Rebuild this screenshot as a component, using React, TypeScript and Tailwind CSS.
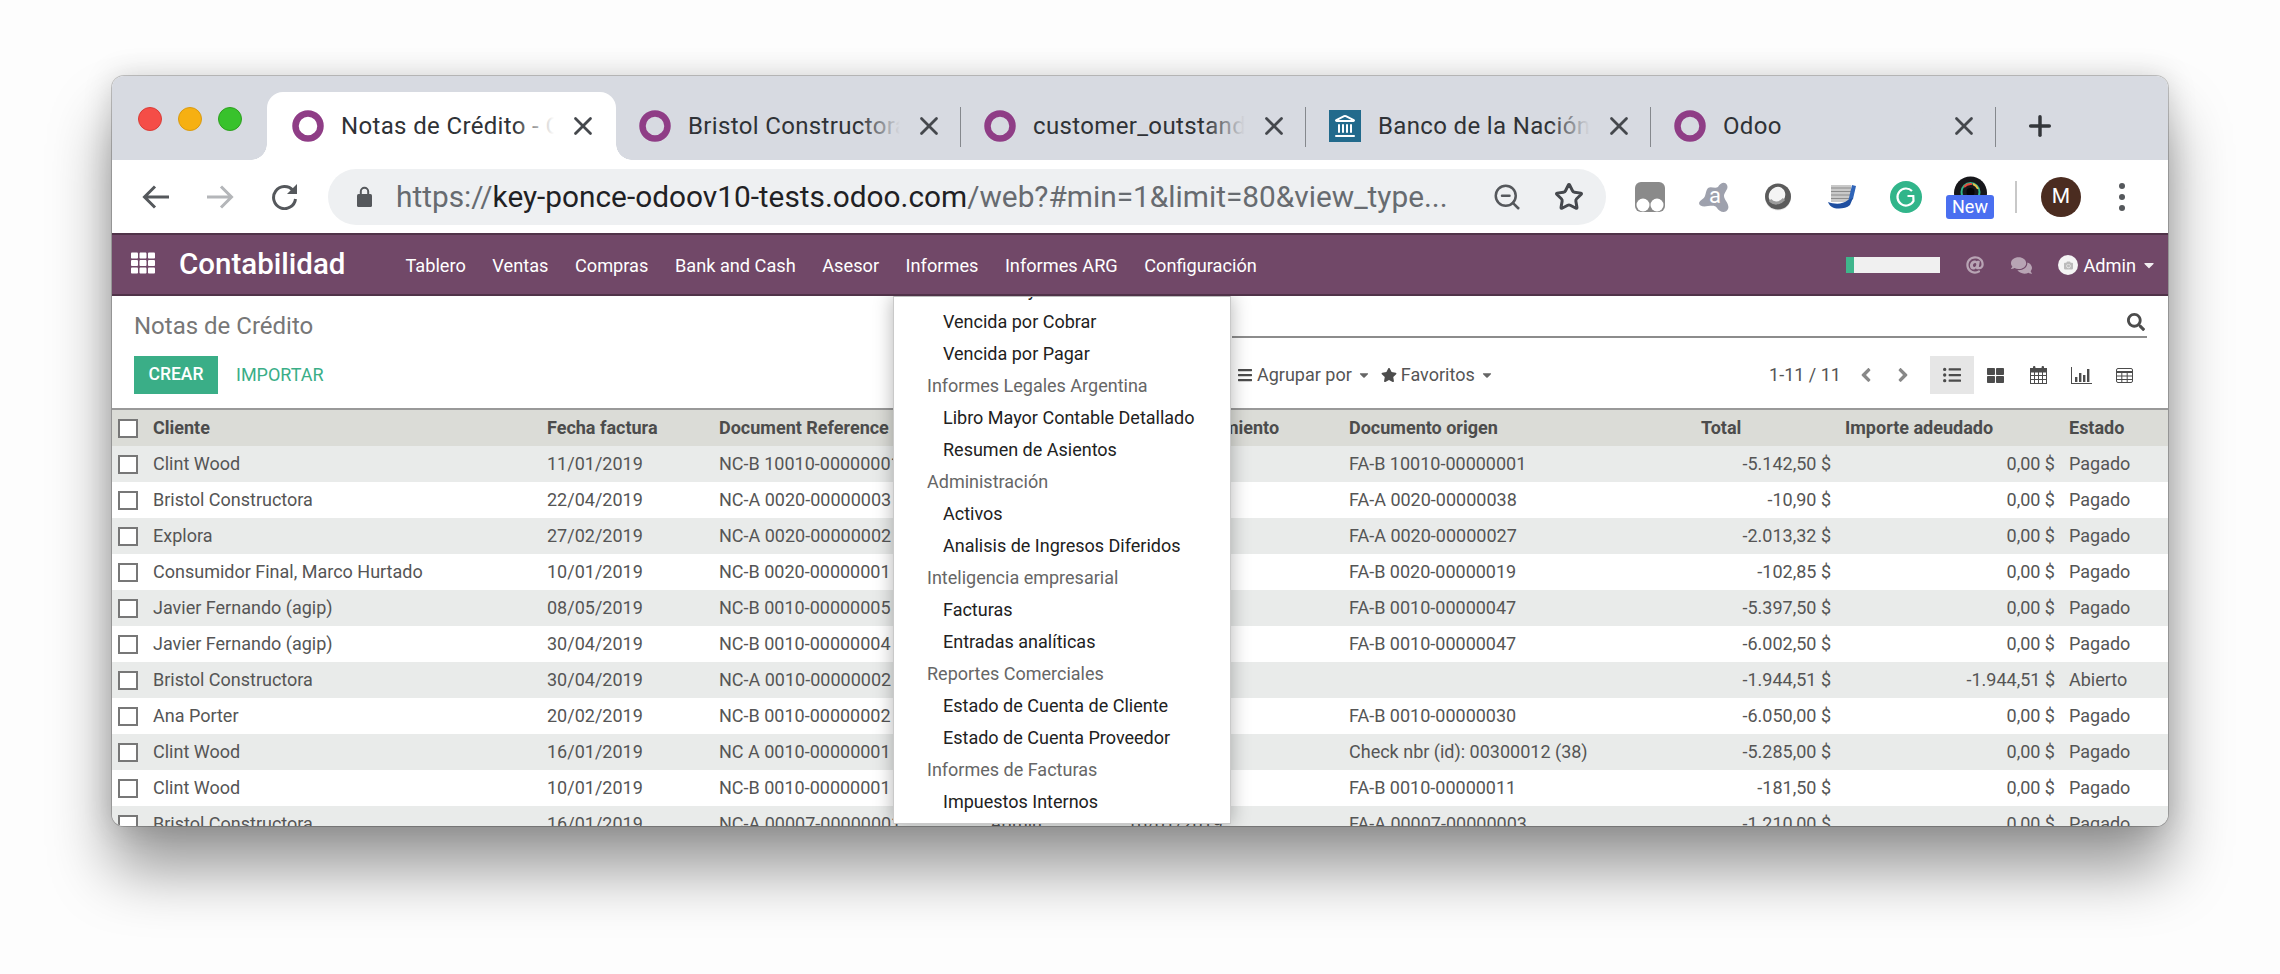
import React from "react";
import { Landmark, Plus, Star, X, ZoomOut } from "lucide-react";
import {
  FaAngleLeft,
  FaAngleRight,
  FaAt,
  FaBars,
  FaCaretDown,
  FaCamera,
  FaComments,
  FaListUl,
  FaSearch,
  FaStar,
  FaTh,
  FaThLarge,
} from "react-icons/fa";

const COLS = "grid grid-cols-[41px_394px_172px_271px_137px_222px_352px_144px_224px_1fr]";

type Row = {
  client: string;
  date: string;
  doc: string;
  origin: string;
  total: string;
  due: string;
  state: string;
  seller?: string;
  limit?: string;
};

const rows: Row[] = [
  { client: "Clint Wood", date: "11/01/2019", doc: "NC-B 10010-00000001", origin: "FA-B 10010-00000001", total: "-5.142,50 $", due: "0,00 $", state: "Pagado" },
  { client: "Bristol Constructora", date: "22/04/2019", doc: "NC-A 0020-00000003", origin: "FA-A 0020-00000038", total: "-10,90 $", due: "0,00 $", state: "Pagado" },
  { client: "Explora", date: "27/02/2019", doc: "NC-A 0020-00000002", origin: "FA-A 0020-00000027", total: "-2.013,32 $", due: "0,00 $", state: "Pagado" },
  { client: "Consumidor Final, Marco Hurtado", date: "10/01/2019", doc: "NC-B 0020-00000001", origin: "FA-B 0020-00000019", total: "-102,85 $", due: "0,00 $", state: "Pagado" },
  { client: "Javier Fernando (agip)", date: "08/05/2019", doc: "NC-B 0010-00000005", origin: "FA-B 0010-00000047", total: "-5.397,50 $", due: "0,00 $", state: "Pagado" },
  { client: "Javier Fernando (agip)", date: "30/04/2019", doc: "NC-B 0010-00000004", origin: "FA-B 0010-00000047", total: "-6.002,50 $", due: "0,00 $", state: "Pagado" },
  { client: "Bristol Constructora", date: "30/04/2019", doc: "NC-A 0010-00000002", origin: "", total: "-1.944,51 $", due: "-1.944,51 $", state: "Abierto" },
  { client: "Ana Porter", date: "20/02/2019", doc: "NC-B 0010-00000002", origin: "FA-B 0010-00000030", total: "-6.050,00 $", due: "0,00 $", state: "Pagado" },
  { client: "Clint Wood", date: "16/01/2019", doc: "NC A 0010-00000001", origin: "Check nbr (id): 00300012 (38)", total: "-5.285,00 $", due: "0,00 $", state: "Pagado" },
  { client: "Clint Wood", date: "10/01/2019", doc: "NC-B 0010-00000001", origin: "FA-B 0010-00000011", total: "-181,50 $", due: "0,00 $", state: "Pagado" },
  { client: "Bristol Constructora", date: "16/01/2019", doc: "NC-A 00007-00000001", origin: "FA-A 00007-00000003", total: "-1.210,00 $", due: "0,00 $", state: "Pagado", seller: "Admin", limit: "16/01/2019" },
];

const menu: { label: string; head?: boolean }[] = [
  { label: "Pendiente y Vencida" },
  { label: "Vencida por Cobrar" },
  { label: "Vencida por Pagar" },
  { label: "Informes Legales Argentina", head: true },
  { label: "Libro Mayor Contable Detallado" },
  { label: "Resumen de Asientos" },
  { label: "Administración", head: true },
  { label: "Activos" },
  { label: "Analisis de Ingresos Diferidos" },
  { label: "Inteligencia empresarial", head: true },
  { label: "Facturas" },
  { label: "Entradas analíticas" },
  { label: "Reportes Comerciales", head: true },
  { label: "Estado de Cuenta de Cliente" },
  { label: "Estado de Cuenta Proveedor" },
  { label: "Informes de Facturas", head: true },
  { label: "Impuestos Internos" },
];

function OdooRing() {
  return (
    <svg width="32" height="32" viewBox="0 0 32 32" className="shrink-0">
      <circle cx="16" cy="16" r="12.5" fill="none" stroke="#8f3d86" strokeWidth="6.5" />
    </svg>
  );
}

function Tab({ icon, title, active }: { icon: React.ReactNode; title: string; active?: boolean }) {
  return (
    <div
      className={`relative flex h-[68px] shrink-0 items-center ${
        active ? "w-[349px] rounded-t-[16px] bg-white pl-[25px] pr-[18px]" : "w-[345px] pl-[23px] pr-[17px]"
      }`}
    >
      {active && (
        <>
          <div className="absolute bottom-0 left-[-16px] h-4 w-4 bg-[radial-gradient(circle_at_0_0,transparent_15.5px,white_16px)]" />
          <div className="absolute bottom-0 right-[-16px] h-4 w-4 bg-[radial-gradient(circle_at_100%_0,transparent_15.5px,white_16px)]" />
        </>
      )}
      {icon}
      <div className="relative ml-[17px] min-w-0 flex-1 overflow-hidden whitespace-nowrap text-[24px] leading-[32px] tracking-[0.35px] text-[#2f3236]">
        {title}
        <div
          className={`absolute inset-y-0 right-0 w-10 ${
            active ? "bg-gradient-to-r from-white/0 to-white" : "bg-gradient-to-r from-[#d7dae1]/0 to-[#d7dae1]"
          }`}
        />
      </div>
      <X className="ml-[14px] shrink-0 text-[#45484d]" size={30} strokeWidth={2.2} />
      {!active && <div className="absolute right-0 top-[15px] h-[40px] w-[1.5px] bg-[#85888d]" />}
    </div>
  );
}

function Extensions() {
  return (
    <div className="ml-[29px] flex items-center">
      {/* tampermonkey */}
      <svg width="30" height="30" viewBox="0 0 30 30">
        <rect width="30" height="30" rx="6" fill="#8a8a8a" />
        <circle cx="8" cy="23" r="6.5" fill="white" />
        <circle cx="22" cy="23" r="6.5" fill="white" />
      </svg>
      {/* avast */}
      <div className="relative ml-[34px] h-[32px] w-[31px]">
        <svg width="31" height="32" viewBox="0 0 31 32">
          <path
            d="M9 7C12 5 16 8 19 6 21 2 26 0 28 4 30 8 25 11 25 15 25 19 31 23 29 28 27 33 20 31 18 27 16 24 13 25 9 25 4 26 0 25 0 22 1 19 5 18 6 15 7 12 7 9 9 7z"
            fill="#9ea1ad"
          />
        </svg>
        <span className="absolute left-[10px] top-[2px] text-[22px] leading-[26px] text-white">a</span>
      </div>
      {/* round extension */}
      <svg className="ml-[35px]" width="26" height="28" viewBox="0 0 26 28">
        <circle cx="13" cy="14.5" r="13" fill="#e6e6e6" />
        <circle cx="13" cy="13.5" r="13" fill="#5b5b5b" />
        <ellipse cx="12" cy="12.5" rx="8" ry="9" fill="#f4f4f4" transform="rotate(30 12 12.5)" />
        <path d="M5 17c3 4 10 4 14-1" stroke="#9b9b9b" strokeWidth="3" fill="none" />
      </svg>
      {/* notes */}
      <svg className="ml-[37px]" width="28" height="25" viewBox="0 0 28 25">
        <rect x="3" y="1" width="20" height="17" fill="#c9c9c9" />
        <path d="M3 4h20M3 7.5h20M3 11h19M3 14.5h18" stroke="#8c8c8c" strokeWidth="1.2" />
        <path d="M24 1l4 1-3 13-5 3z" fill="#2f64b8" />
        <path d="M0 18c6 2 14 3 20-2l5-2-3 7c-4 4-12 4-16 3-3-1-5-3-6-6z" fill="#1f4fa0" />
      </svg>
      {/* grammarly */}
      <svg className="ml-[34px]" width="32" height="32" viewBox="0 0 32 32">
        <circle cx="16" cy="16" r="16" fill="#31b58a" />
        <path d="M22 10a8.5 8.5 0 1 0 1.5 10l-.2-5h-5.8" stroke="white" strokeWidth="2.2" fill="none" />
      </svg>
      {/* camera with badge */}
      <div className="relative ml-[32px] h-[44px] w-[33px]">
        <svg width="33" height="22" viewBox="0 0 33 22">
          <circle cx="16.5" cy="18" r="16.5" fill="#17171b" />
          <circle cx="16.5" cy="17" r="9" fill="none" stroke="#31b58a" strokeWidth="2" />
          <path d="M10 12a9 9 0 0 1 8-3" stroke="#e34b3f" strokeWidth="2" fill="none" />
          <path d="M19 9a9 9 0 0 1 5 5" stroke="#e8c14a" strokeWidth="2" fill="none" />
          <circle cx="16.5" cy="17" r="4" fill="#050505" />
        </svg>
        <div className="absolute left-[-8px] top-[20px] flex h-[24px] w-[48px] items-center justify-center rounded-[3px] bg-[#4a6ff0] text-[18px] leading-none text-white">
          New
        </div>
      </div>
      <div className="ml-[28px] h-[32px] w-[2px] bg-[#c8c8c8]" />
      <div className="ml-[24px] flex h-[40px] w-[40px] items-center justify-center rounded-full bg-[#4b2c20] text-[21px] text-white">
        M
      </div>
      <div className="ml-[38px] flex flex-col gap-[5px]">
        <div className="h-[6px] w-[6px] rounded-full bg-[#55585c]" />
        <div className="h-[6px] w-[6px] rounded-full bg-[#55585c]" />
        <div className="h-[6px] w-[6px] rounded-full bg-[#55585c]" />
      </div>
    </div>
  );
}

function ViewBtn({ children, active }: { children: React.ReactNode; active?: boolean }) {
  return (
    <div className={`flex h-[38px] items-center justify-center text-[#4c4c4c] ${active ? "ml-[9px] w-[44px] bg-[#e6e6e6]" : "w-[43px]"}`}>
      {children}
    </div>
  );
}

export default function App() {
  return (
    <div className="h-[974px] w-[2280px] overflow-hidden bg-[#fdfdfd] pl-[112px] pt-[76px] font-[family-name:Roboto,sans-serif]">
      <div className="flex h-[750px] w-[2056px] flex-col overflow-hidden rounded-[12px] bg-white shadow-[0_0_0_1px_rgba(0,0,0,0.2),0_44px_62px_rgba(0,0,0,0.4),0_0_30px_rgba(0,0,0,0.16)]">
        {/* tab strip */}
        <div className="flex h-[84px] shrink-0 items-end bg-[#d7dae1]">
          <div className="mb-[29px] ml-[26px] flex gap-4">
            <div className="h-6 w-6 rounded-full border border-[#d93c37] bg-[#f54d47]" />
            <div className="h-6 w-6 rounded-full border border-[#d99a10] bg-[#f6b012]" />
            <div className="h-6 w-6 rounded-full border border-[#2da01f] bg-[#38c22c]" />
          </div>
          <div className="ml-[25px] flex items-center">
            <Tab active icon={<OdooRing />} title="Notas de Crédito - Odoo" />
            <Tab icon={<OdooRing />} title="Bristol Constructora" />
            <Tab icon={<OdooRing />} title="customer_outstanding" />
            <Tab
              icon={
                <div className="flex h-[32px] w-[32px] shrink-0 items-center justify-center bg-[#226a8c]">
                  <Landmark size={24} className="text-white" />
                </div>
              }
              title="Banco de la Nación Argentina"
            />
            <Tab icon={<OdooRing />} title="Odoo" />
            <Plus className="ml-[28px] text-[#33363a]" size={32} strokeWidth={2.6} />
          </div>
        </div>

        {/* browser toolbar */}
        <div className="flex h-[73px] shrink-0 items-center bg-white pl-[30px]">
          <svg width="27" height="24" viewBox="0 0 27 24" fill="none" stroke="#55585c" strokeWidth="3">
            <path d="M27 12H3M13 1.5 2.5 12 13 22.5" />
          </svg>
          <svg className="ml-[38px]" width="27" height="24" viewBox="0 0 27 24" fill="none" stroke="#b4b6b9" strokeWidth="3">
            <path d="M0 12h24M14 1.5 24.5 12 14 22.5" />
          </svg>
          <svg className="ml-[37px]" width="27" height="26" viewBox="0 0 27 26" fill="none">
            <path d="M22 6.5A11 11 0 1 0 24.5 15" stroke="#55585c" strokeWidth="3" />
            <path d="M26 0v10H16z" fill="#55585c" />
          </svg>
          <div className="ml-[30px] flex h-[56px] w-[1278px] items-center rounded-full bg-[#eef0f2] pl-[29px] pr-[22px]">
            <svg className="shrink-0" width="15" height="21" viewBox="0 0 15 21">
              <path d="M3.8 9V5.5a3.7 3.7 0 0 1 7.4 0V9" fill="none" stroke="#55585c" strokeWidth="2" />
              <rect y="8" width="15" height="13" rx="1.5" fill="#55585c" />
            </svg>
            <div className="ml-[24px] min-w-0 flex-1 whitespace-nowrap text-[29.8px] leading-none text-[#676b70]">
              https://<span className="text-[#1f2124]">key-ponce-odoov10-tests.odoo.com</span>/web?#min=1&amp;limit=80&amp;view_type...
            </div>
            <ZoomOut size={30} strokeWidth={2} className="ml-[32px] shrink-0 text-[#55585c]" />
            <Star size={30} strokeWidth={2.4} className="ml-[32px] shrink-0 text-[#45484d]" />
          </div>
          <Extensions />
        </div>

        {/* odoo navbar */}
        <div className="flex h-[63px] shrink-0 items-center border-y-2 border-y-[#503349] bg-[#714868] pl-[19px] text-[18.2px] text-white">
          <FaTh size={24} className="mb-[4px] text-white" />
          <span className="ml-[24px] text-[29.5px] font-medium leading-none">Contabilidad</span>
          <div className="ml-[60px] mt-[2px] flex gap-[26.5px]">
            <span>Tablero</span>
            <span>Ventas</span>
            <span>Compras</span>
            <span>Bank and Cash</span>
            <span>Asesor</span>
            <span>Informes</span>
            <span>Informes ARG</span>
            <span>Configuración</span>
          </div>
          <div className="ml-auto mt-[2px] flex items-center pr-[11px]">
            <div className="flex h-[16px] w-[94px] bg-[#f0f0f0]">
              <div className="h-full w-2 bg-[#3fb58c]" />
            </div>
            <FaAt size={18} className="ml-[26px] text-white/50" />
            <FaComments size={21} className="ml-[27px] text-white/50" />
            <div className="ml-[26px] flex h-[20px] w-[20px] items-center justify-center rounded-full bg-[#f4f4f4]">
              <FaCamera size={9} className="text-[#bbb]" />
            </div>
            <span className="ml-[5px]">Admin</span>
            <FaCaretDown size={16} className="ml-[5px] text-white/90" />
          </div>
        </div>

        {/* content */}
        <div className="relative min-h-0 flex-1 overflow-hidden text-[18px] leading-none text-[#555]">
          <div className="flex h-[60px] items-start pl-[22px] pr-[21px]">
            <span className="mt-[16px] text-[24px] leading-[28px] text-[#777]">Notas de Crédito</span>
            <div className="ml-auto flex h-[42px] w-[915px] items-end justify-end border-b-2 border-[#8c8c8c] pb-[5px] pr-[2px]">
              <FaSearch size={18} className="text-[#4c4c4c]" />
            </div>
          </div>
          <div className="flex h-[38px] items-center pl-[22px] pr-[22px]">
            <div className="flex w-[1103px] items-center">
              <div className="flex h-[38px] w-[84px] items-center justify-center bg-[#3aae87] text-[17.5px] font-medium text-white">
                CREAR
              </div>
              <span className="ml-[18px] text-[#3aae87]">IMPORTAR</span>
            </div>
            <FaBars size={16} className="text-[#4c4c4c]" />
            <span className="ml-[4px]">Agrupar por</span>
            <FaCaretDown size={14} className="ml-[5px] text-[#666]" />
            <FaStar size={16} className="ml-[10px] text-[#4c4c4c]" />
            <span className="ml-[4px]">Favoritos</span>
            <FaCaretDown size={14} className="ml-[5px] text-[#666]" />
            <span className="ml-auto">1-11 / 11</span>
            <div className="ml-[7px] flex w-[36px] justify-center">
              <FaAngleLeft size={22} className="text-[#888]" />
            </div>
            <div className="ml-px flex w-[36px] justify-center">
              <FaAngleRight size={22} className="text-[#888]" />
            </div>
            <ViewBtn active>
              <FaListUl size={18} />
            </ViewBtn>
            <ViewBtn>
              <FaThLarge size={17} />
            </ViewBtn>
            <ViewBtn>
              <svg width="17" height="18" viewBox="0 0 17 18" fill="none" stroke="#4c4c4c" strokeWidth="1">
                <rect x="0.5" y="2.5" width="16" height="15" fill="white" />
                <rect x="0.5" y="2.5" width="16" height="3.5" fill="#4c4c4c" />
                <path d="M4.5 6v11.5M8.5 6v11.5M12.5 6v11.5M.5 9.5h16M.5 13.5h16" />
                <rect x="3" y="0" width="2.4" height="4" rx="1" fill="#4c4c4c" stroke="none" />
                <rect x="11.6" y="0" width="2.4" height="4" rx="1" fill="#4c4c4c" stroke="none" />
              </svg>
            </ViewBtn>
            <ViewBtn>
              <svg width="21" height="17" viewBox="0 0 21 17" fill="#4c4c4c">
                <path d="M0 0h1v16h20v1H0z" />
                <rect x="4" y="10" width="2.4" height="5" />
                <rect x="8" y="6" width="2.4" height="9" />
                <rect x="12" y="8" width="2.4" height="7" />
                <rect x="16" y="2" width="2.4" height="13" />
              </svg>
            </ViewBtn>
            <ViewBtn>
              <svg width="17" height="15" viewBox="0 0 17 15" fill="none" stroke="#4c4c4c" strokeWidth="1">
                <rect x="0.5" y="0.5" width="16" height="14" rx="1.5" />
                <path d="M.5 4h16" strokeWidth="2" />
                <path d="M.5 8h16M.5 11.5h16M5.8 4v10.5M11.2 4v10.5" />
              </svg>
            </ViewBtn>
          </div>

          {/* list view */}
          <div className="mt-[14px]">
            <div className={`${COLS} h-[38px] items-center border-t-2 border-[#999] bg-[#dbdcd7] font-bold text-[#4c4c4c]`}>
              <div className="ml-[6px] h-[19px] w-[20px] border-2 border-[#777] bg-white" />
              <div>Cliente</div>
              <div>Fecha factura</div>
              <div>Document Reference</div>
              <div />
              <div>Fecha vencimiento</div>
              <div>Documento origen</div>
              <div>Total</div>
              <div>Importe adeudado</div>
              <div>Estado</div>
            </div>
            {rows.map((r, i) => (
              <div key={i} className={`${COLS} h-[36px] items-center ${i % 2 === 0 ? "bg-[#e9ebea]" : "bg-white"}`}>
                <div className="ml-[6px] h-[19px] w-[20px] border-2 border-[#777] bg-white" />
                <div className="whitespace-nowrap">{r.client}</div>
                <div>{r.date}</div>
                <div className="whitespace-nowrap">{r.doc}</div>
                <div>{r.seller}</div>
                <div>{r.limit}</div>
                <div className="whitespace-nowrap">{r.origin}</div>
                <div className="pr-[14px] text-right">{r.total}</div>
                <div className="pr-[14px] text-right">{r.due}</div>
                <div>{r.state}</div>
              </div>
            ))}
          </div>

          {/* open Informes dropdown */}
          <div className="absolute left-[781px] top-0 h-[528px] w-[338px] overflow-hidden border border-t-[#bbb] border-x-[#c9c9c9] border-b-[#c9c9c9] bg-white shadow-[0_0_18px_rgba(0,0,0,0.3)]">
            <div className="mt-[-23px]">
              {menu.map((m) => (
                <div
                  key={m.label}
                  className={`flex h-[32px] items-center whitespace-nowrap ${m.head ? "pl-[33px] text-[#666]" : "pl-[49px] text-[#212121]"}`}
                >
                  {m.label}
                </div>
              ))}
            </div>
          </div>
        </div>
      </div>
    </div>
  );
}
